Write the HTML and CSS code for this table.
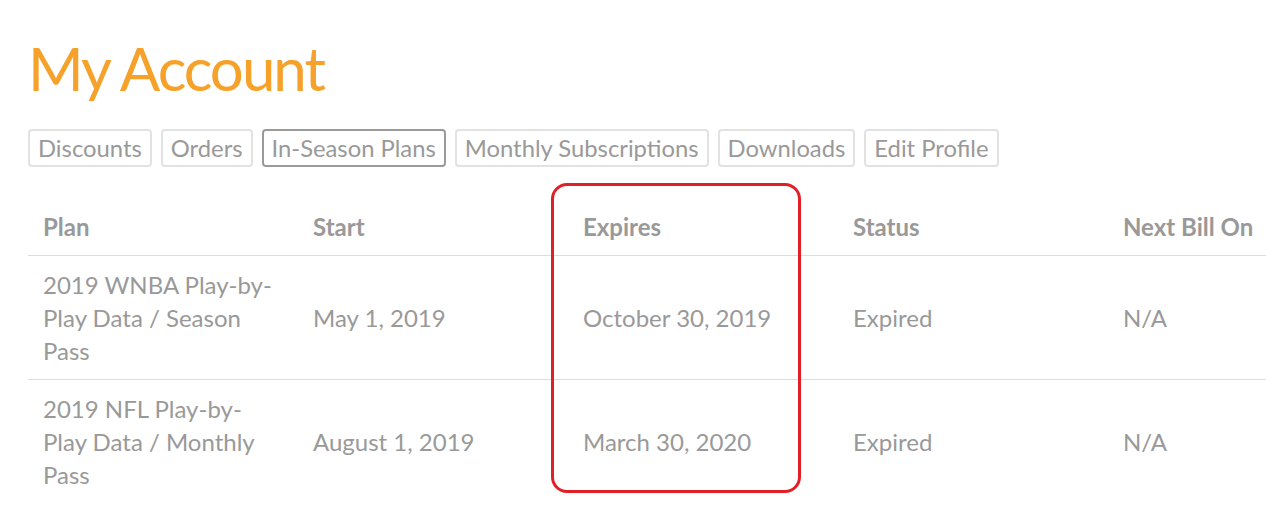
FILE: index.html
```html
<!DOCTYPE html>
<html>
<head>
<meta charset="utf-8">
<link rel="stylesheet" href="styles.css">
</head>
<body>
<div class="page">
  <h1 class="title">My Account</h1>
  <nav class="tabs">
    <a class="tab">Discounts</a>
    <a class="tab">Orders</a>
    <a class="tab active">In-Season Plans</a>
    <a class="tab">Monthly Subscriptions</a>
    <a class="tab">Downloads</a>
    <a class="tab">Edit Profile</a>
  </nav>
  <div class="table-wrap">
    <table class="plans">
      <thead>
        <tr><th>Plan</th><th>Start</th><th>Expires</th><th>Status</th><th>Next Bill On</th></tr>
      </thead>
      <tbody>
        <tr><td>2019 WNBA Play-by-Play Data / Season Pass</td><td>May 1, 2019</td><td>October 30, 2019</td><td>Expired</td><td>N/A</td></tr>
        <tr><td>2019 NFL Play-by-Play Data / Monthly Pass</td><td>August 1, 2019</td><td>March 30, 2020</td><td>Expired</td><td>N/A</td></tr>
      </tbody>
    </table>
    <div class="highlight"></div>
  </div>
</div>
</body>
</html>
```
FILE: styles.css
```css
html {
  overflow: hidden;
}
body {
  margin: 0;
  padding: 0;
  background: #fff;
  font-family: Lato, "Open Sans", sans-serif;
  color: #999;
}
.page {
  padding: 0 0 0 28px;
}
.title {
  margin: 0;
  padding-top: 30px;
  font-size: 60px;
  font-weight: 400;
  line-height: 76px;
  color: #f5a12a;
  letter-spacing: -2px;
}
.tabs {
  display: flex;
  gap: 9px;
  margin-top: 23px;
}
.tab {
  display: block;
  font-size: 23.8px;
  line-height: 30px;
  padding: 2px 8px;
  border: 2px solid #e2e2e2;
  border-radius: 4px;
  color: #999;
}
.tab.active {
  border-color: #9a9a9a;
}
.table-wrap {
  position: relative;
  margin-top: 31px;
  width: 1350px;
}
.plans {
  width: 1350px;
  border-collapse: collapse;
  table-layout: fixed;
  font-size: 24px;
}
.plans th, .plans td {
  box-sizing: border-box;
  width: 270px;
  text-align: left;
  padding: 12px 16px 12px 15px;
  line-height: 33px;
  vertical-align: middle;
}
.plans th {
  font-weight: 700;
  color: #999;
  border-bottom: 1px solid #ddd;
}
.plans tbody tr {
  border-bottom: 1px solid #ddd;
}
.plans tbody tr:last-child {
  border-bottom: none;
}
.highlight {
  position: absolute;
  left: 523px;
  top: -15px;
  width: 244px;
  height: 304px;
  border: 3px solid #e21f26;
  border-radius: 16px;
}
```
